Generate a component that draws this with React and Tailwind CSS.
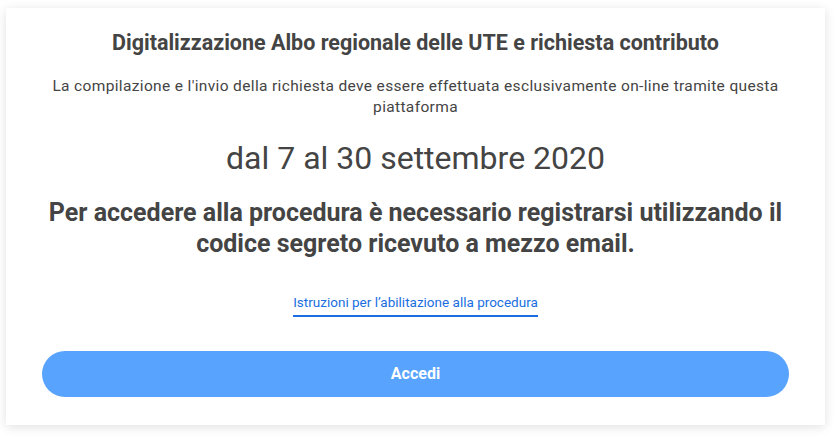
export default function App() {
  return (
    <div className="min-h-[437px] bg-white pt-[8px] pl-[6px]" style={{ fontFamily: "Roboto, sans-serif" }}>
      <div className="w-[819px] h-[417px] bg-white shadow-[0_2px_10px_rgba(0,0,0,0.12)] px-[36px] pt-[22px] text-[#444] text-center flex flex-col items-center">
        <h1 className="text-[21.5px] font-bold leading-[26px]">
          Digitalizzazione Albo regionale delle UTE e richiesta contributo
        </h1>
        <p className="mt-[20px] text-[15.5px] leading-[21px] tracking-[0.35px] max-w-[740px]">
          La compilazione e l'invio della richiesta deve essere effettuata esclusivamente on-line tramite questa piattaforma
        </p>
        <p className="mt-[20px] text-[32px] leading-[40px]">dal 7 al 30 settembre 2020</p>
        <p className="mt-[19px] text-[25px] font-bold leading-[31px] max-w-[750px]">
          Per accedere alla procedura è necessario registrarsi utilizzando il codice segreto ricevuto a mezzo email.
        </p>
        <a href="#" className="mt-[33px] text-[13.5px] leading-[20px] text-[#1a6ee0] border-b-[2px] border-[#1a6ee0] pb-[3px]">
          Istruzioni per l’abilitazione alla procedura
        </a>
        <button className="mt-[34px] w-full h-[46px] rounded-full bg-[#57a3fd] text-white text-[16px] font-bold">
          Accedi
        </button>
      </div>
    </div>
  );
}
